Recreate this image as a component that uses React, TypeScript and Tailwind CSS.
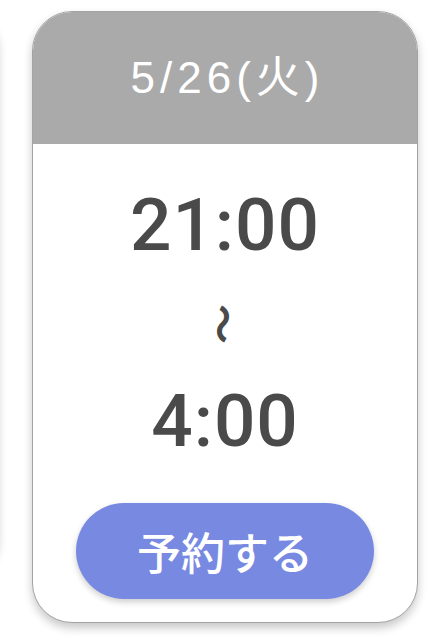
const jp = "font-['Noto_Sans_CJK_JP','Noto_Sans',sans-serif]";
const num = "font-['Liberation_Sans','Noto_Sans_CJK_JP',sans-serif]";
const time = "font-['Roboto','Liberation_Sans',sans-serif]";

function SlotCard() {
  return (
    <div className="w-[386px] h-[612px] shrink-0 rounded-[40px] overflow-hidden bg-white border border-[#a3a3a3] shadow-[0_5px_10px_rgba(0,0,0,0.22)] flex flex-col">
      <div className="h-[132px] bg-[#aaaaaa] flex items-center justify-center">
        <span className={`${num} text-white text-[44px] leading-none tracking-[5px] pl-[5px]`}>5/26(火)</span>
      </div>
      <div className="flex-1 flex flex-col items-center">
        <div className={`${time} mt-[45px] text-[73px] leading-[72px] font-medium tracking-[1px] text-[#4a4a4a]`}>21:00</div>
        <div className={`${jp} mt-[43px] h-[40px] w-[40px] flex items-center justify-center text-[40px] leading-none font-bold text-[#4a4a4a] rotate-90`}>
          〜
        </div>
        <div className={`${time} mt-[41px] text-[73px] leading-[72px] font-medium tracking-[1px] text-[#4a4a4a]`}>4:00</div>
        <button className={`${jp} mt-[46px] w-[298px] h-[96px] rounded-full bg-[#7889e2] text-white text-[44px] font-medium leading-none shadow-[0_3px_6px_rgba(0,0,0,0.2)]`}>
          予約する
        </button>
      </div>
    </div>
  );
}

export default function App() {
  return (
    <div className="w-[438px] h-[640px] overflow-hidden bg-white">
      <div className="flex gap-[33px] pt-[11px] ml-[-387px]">
        <div className="w-[386px] h-[570px] shrink-0 rounded-[40px] bg-white shadow-[0_0_8px_rgba(0,0,0,0.18)]" />
        <SlotCard />
      </div>
    </div>
  );
}
